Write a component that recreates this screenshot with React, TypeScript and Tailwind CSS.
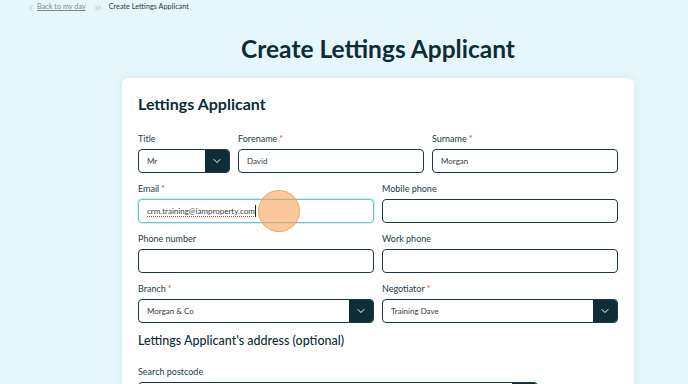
import { ChevronDown, ChevronLeft, ChevronsRight } from "lucide-react";

const font = { fontFamily: "Lato, 'Noto Sans', sans-serif" };

function Label({ text, required }: { text: string; required?: boolean }) {
  return (
    <div className="h-3 leading-3 text-[9px] text-[#243c44] mb-1">
      {text}
      {required && <span className="text-[#e0464b] ml-0.5">*</span>}
    </div>
  );
}

function TextField({ label, required, value, focused }: { label: string; required?: boolean; value?: string; focused?: boolean }) {
  return (
    <div className="flex flex-col min-w-0">
      <Label text={label} required={required} />
      <div
        className={
          "h-6 rounded-[4px] bg-white flex items-center px-2 text-[8px] text-[#3a3a3a] " +
          (focused ? "border border-[#6cc3c9] shadow-[0_0_0_1px_#d6f0f2]" : "border border-[#1d3a44]")
        }
      >
        {focused ? (
          <span className="underline decoration-dotted decoration-[#d33] underline-offset-2">{value}</span>
        ) : (
          value
        )}
        {focused && <span className="w-px h-3 bg-[#222]" />}
      </div>
    </div>
  );
}

function SelectField({ label, required, value }: { label: string; required?: boolean; value: string }) {
  return (
    <div className="flex flex-col min-w-0">
      <Label text={label} required={required} />
      <div className="h-6 rounded-[4px] bg-white border border-[#1d3a44] flex items-center overflow-hidden">
        <span className="flex-1 px-2 text-[8px] text-[#3a3a3a]">{value}</span>
        <span className="w-[24px] h-full bg-[#0f2d38] flex items-center justify-center">
          <ChevronDown className="w-3 h-3 text-white" strokeWidth={2} />
        </span>
      </div>
    </div>
  );
}

export default function App() {
  return (
    <div className="w-[688px] h-[384px] overflow-hidden bg-[#e5f7fc] relative" style={font}>
      {/* Breadcrumb */}
      <div className="flex items-center h-[15px] pl-[26px] text-[7.3px] text-[#3d4f55]">
        <ChevronLeft className="w-2.5 h-2.5 text-[#9aa5a8]" strokeWidth={1.5} />
        <span className="ml-[1px] underline text-[#7f8b8e]">Back to my day</span>
        <ChevronsRight className="w-2.5 h-2.5 ml-[7px] mr-[6px] text-[#9aa5a8]" strokeWidth={1.5} />
        <span className="text-[#2a3d43]">Create Lettings Applicant</span>
      </div>

      <h1 className="text-center text-[24.5px] font-bold text-[#0d2c36] mt-[19px] leading-[30px] pl-[68px]">
        Create Lettings Applicant
      </h1>

      {/* Card */}
      <div className="ml-[122px] mt-[14px] w-[512px] bg-white rounded-t-[6px] shadow-[0_0_8px_rgba(60,120,140,0.12)] px-4 pt-[15px] pb-6">
        <h2 className="text-[16px] font-bold text-[#0d2c36] leading-[22px]">Lettings Applicant</h2>

        <div className="mt-[18px] grid grid-cols-[92px_1fr_1fr] gap-x-2">
          <SelectField label="Title" value="Mr" />
          <TextField label="Forename" required value="David" />
          <TextField label="Surname" required value="Morgan" />
        </div>

        <div className="mt-[10px] grid grid-cols-2 gap-x-2 gap-y-[10px]">
          <TextField label="Email" required value="crm.training@iamproperty.com" focused />
          <TextField label="Mobile phone" />
          <TextField label="Phone number" />
          <TextField label="Work phone" />
          <SelectField label="Branch" required value="Morgan & Co" />
          <SelectField label="Negotiator" required value="Training Dave" />
        </div>

        <h3 className="mt-[10px] text-[12.5px] font-medium text-[#0d2c36] leading-[16px]">
          Lettings Applicant's address (optional)
        </h3>

        <div className="mt-[17px] w-[400px]">
          <Label text="Search postcode" />
          <div className="h-6 rounded-[4px] bg-white border border-[#1d3a44] flex overflow-hidden">
            <span className="flex-1" />
            <span className="w-[25px] h-full bg-[#0f2d38]" />
          </div>
        </div>
      </div>

      {/* Click indicator */}
      <div className="absolute left-[258px] top-[190px] w-[42px] h-[42px] rounded-full bg-[#f8a25c]/60 border border-[#f39a4f]/70" />
    </div>
  );
}
